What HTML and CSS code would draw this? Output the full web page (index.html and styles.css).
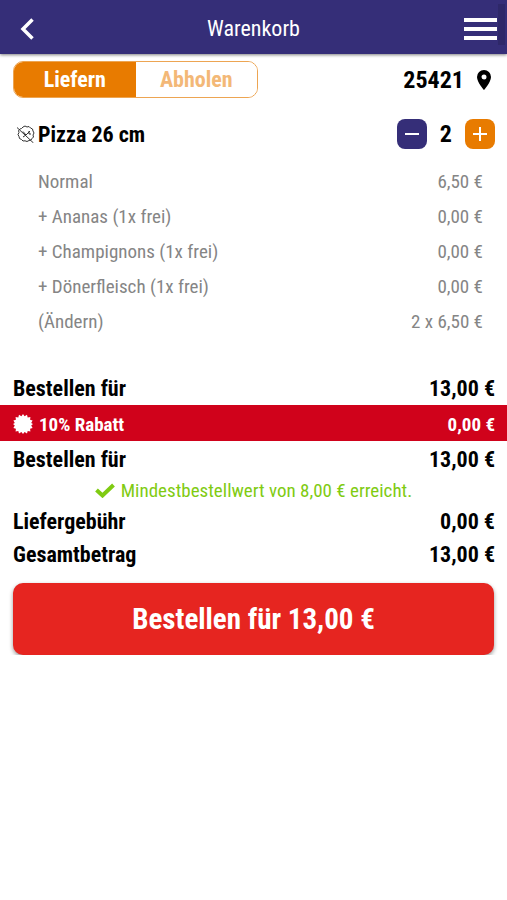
FILE: index.html
```html
<!DOCTYPE html>
<html lang="de">

<head>
	<meta charset="utf-8">
	<meta name="viewport" content="width=device-width, initial-scale=1">
	<title>Warenkorb</title>
	<link rel="stylesheet" href="styles.css">
</head>

<body>
	<header class="header">
		<button type="button" class="icon-button back" aria-label="Zurück">
			<svg width="14" height="22" viewBox="0 0 14 22"><path d="M12.500 1.500L3 11l9.500 9.500" fill="none" stroke="#fff" stroke-width="3.500"/></svg>
		</button>
		<h1 class="title">Warenkorb</h1>
		<button type="button" class="icon-button menu" aria-label="Menü">
			<svg width="33" height="24" viewBox="0 0 33 24"><path d="M0 3h33M0 12h33M0 21h33" stroke="#fff" stroke-width="4"/></svg>
		</button>
		<div class="scroll-thumb"></div>
	</header>

	<main class="cart">
		<div class="delivery">
			<div class="switch">
				<button type="button" class="switch-option active">Liefern</button>
				<button type="button" class="switch-option">Abholen</button>
			</div>
			<a href="#" class="zip">25421
				<svg width="14" height="20" viewBox="0 0 14 20"><path fill-rule="evenodd" d="M7 0a7 7 0 0 0-7 7c0 5.200 7 13 7 13s7-7.800 7-13a7 7 0 0 0-7-7zm0 4.500a2.500 2.500 0 1 1 0 5 2.500 2.500 0 0 1 0-5z"/></svg>
			</a>
		</div>

		<section class="item">
			<div class="item-head">
				<svg class="item-icon" width="18" height="18" viewBox="0 0 18 18" fill="none" stroke="#333" stroke-width="1">
					<path d="M6 2l2-1 2 1 2-.5 1.500 1.500 2 1 .5 2 1 2-1 2 .5 2-1.500 1.500-1 1.500-2 .5-2 1-2-.7-2 .2-1.500-1.500-2-1-.5-2-1-2 1-2-.5-2 1.500-1.500 1.500-.5z"/>
					<path d="M0 2.500L16.500 18M6 6.500l3 3.500 4-4M6 12l3-2M12 6v3h2"/>
				</svg>
				<h2 class="item-name">Pizza 26 cm</h2>
				<div class="amount">
					<button type="button" class="amount-button minus" aria-label="Weniger">
						<svg width="14" height="14" viewBox="0 0 14 14"><path d="M0 7h14" stroke="#fff" stroke-width="2"/></svg>
					</button>
					<span>2</span>
					<button type="button" class="amount-button plus" aria-label="Mehr">
						<svg width="14" height="14" viewBox="0 0 14 14"><path d="M0 7h14M7 0v14" stroke="#fff" stroke-width="2"/></svg>
					</button>
				</div>
			</div>
			<ul class="options">
				<li><span>Normal</span><span>6,50 €</span></li>
				<li><span>+ Ananas (1x frei)</span><span>0,00 €</span></li>
				<li><span>+ Champignons (1x frei)</span><span>0,00 €</span></li>
				<li><span>+ Dönerfleisch (1x frei)</span><span>0,00 €</span></li>
				<li><a href="#">(Ändern)</a><span>2 x 6,50 €</span></li>
			</ul>
		</section>

		<section class="totals">
			<div class="total"><span>Bestellen für</span><span>13,00 €</span></div>
			<div class="discount">
				<svg width="20" height="20" viewBox="0 0 20 20"><path fill="#fff" d="M10 0l1.600 2.200L14 .8l.7 2.600 2.700-.3-.3 2.700 2.500.8-1.400 2.300L20 10l-1.800 1.500 1.400 2.500-2.500.7.3 2.700-2.700-.3L14 19.500l-2.400-1.600L10 20l-1.600-2.100L6 19.500l-.7-2.400-2.700.3.300-2.700-2.500-.7 1.400-2.500L0 10l1.800-1.100L.4 6.600l2.500-.8-.3-2.700 2.700.3L6 .8l2.400 1.400z"/></svg>
				<span>10% Rabatt</span>
				<span class="discount-price">0,00 €</span>
			</div>
			<div class="total"><span>Bestellen für</span><span>13,00 €</span></div>
			<p class="minimum">
				<svg width="20" height="15" viewBox="0 0 20 15"><path d="M1.500 7l6 5.500L18.500 2" fill="none" stroke="#7fcb12" stroke-width="4"/></svg>
				Mindestbestellwert von 8,00 € erreicht.
			</p>
			<div class="total"><span>Liefergebühr</span><span>0,00 €</span></div>
			<div class="total"><span>Gesamtbetrag</span><span>13,00 €</span></div>
		</section>

		<button type="button" class="order">Bestellen für 13,00 €</button>
	</main>
</body>

</html>
```
FILE: styles.css
```css
* {
	box-sizing: border-box;
}

body {
	margin: 0;
	background-color: #fff;
	color: #000;
	font-family: "Roboto Condensed", "Liberation Sans Narrow", Roboto, sans-serif;
	font-size: 22px;
}

button {
	border: none;
	padding: 0;
	font-family: inherit;
	cursor: pointer;
}

a {
	color: inherit;
	text-decoration: none;
}

svg {
	display: block;
	flex-shrink: 0;
}

.header {
	position: relative;
	display: grid;
	grid-template-columns: 1fr auto 1fr;
	align-items: center;
	height: 54px;
	padding: 3px 10px 0;
	background-color: #352e78;
	color: #fff;
	box-shadow: 0 1px 3px rgba(0, 0, 0, 0.5);
}

.title {
	margin: 0;
	font-size: 22px;
	font-weight: 400;
}

.icon-button {
	background: none;
}

.back {
	justify-self: start;
	padding-left: 10px;
}

.menu {
	justify-self: end;
}

.scroll-thumb {
	position: absolute;
	top: 4px;
	right: 2px;
	width: 7px;
	height: 41px;
	background-color: rgba(0, 0, 0, 0.12);
}

.delivery {
	display: flex;
	align-items: center;
	justify-content: space-between;
	padding: 7px 16px 0 13px;
}

.switch {
	display: flex;
	width: 245px;
	height: 37px;
	border: 1px solid #eda552;
	border-radius: 10px;
	overflow: hidden;
}

.switch-option {
	flex: 1;
	background-color: #fff;
	color: #f3b877;
	font-size: 22px;
	font-weight: 700;
}

.switch-option.active {
	background-color: #e87b00;
	color: #fff;
}

.zip {
	display: flex;
	align-items: center;
	gap: 13px;
	font-size: 24px;
	font-weight: 700;
}

.item-head {
	display: flex;
	align-items: center;
	height: 36px;
	margin-top: 18px;
	padding: 0 12px 0 17px;
}

.item-name {
	flex: 1;
	margin: 0 0 0 3px;
	font-size: 22px;
	font-weight: 700;
}

.amount {
	display: flex;
	align-items: center;
	gap: 13px;
	font-size: 24px;
	font-weight: 700;
}

.amount-button {
	display: flex;
	align-items: center;
	justify-content: center;
	width: 30px;
	height: 30px;
	border-radius: 8px;
}

.minus {
	background-color: #352e78;
}

.plus {
	background-color: #e87b00;
}

.options {
	margin: 12px 0 0;
	padding: 0 24px 0 38px;
	list-style: none;
	color: #858585;
	font-size: 19px;
	line-height: 35px;
}

.options li {
	display: flex;
	justify-content: space-between;
}

.totals {
	margin-top: 34px;
}

.total {
	display: flex;
	justify-content: space-between;
	padding: 1px 12px 0 13px;
	font-weight: 700;
	line-height: 32px;
}

.total:first-child {
	margin-top: -1px;
}

.discount {
	display: flex;
	align-items: center;
	gap: 6px;
	height: 36px;
	margin-bottom: 2px;
	padding: 2px 12px 0 13px;
	background-color: #d0021b;
	color: #fff;
	font-size: 19px;
	font-weight: 700;
}

.discount-price {
	margin-left: auto;
}

.minimum {
	display: flex;
	align-items: center;
	justify-content: center;
	gap: 6px;
	margin: 0;
	color: #7fcb12;
	font-size: 19px;
	line-height: 29px;
}

.order {
	display: block;
	width: calc(100% - 26px);
	height: 72px;
	margin: 12px auto 0;
	border-radius: 10px;
	background-color: #e62520;
	color: #fff;
	font-size: 29px;
	font-weight: 700;
	box-shadow: 0 2px 4px rgba(0, 0, 0, 0.4);
}
```
